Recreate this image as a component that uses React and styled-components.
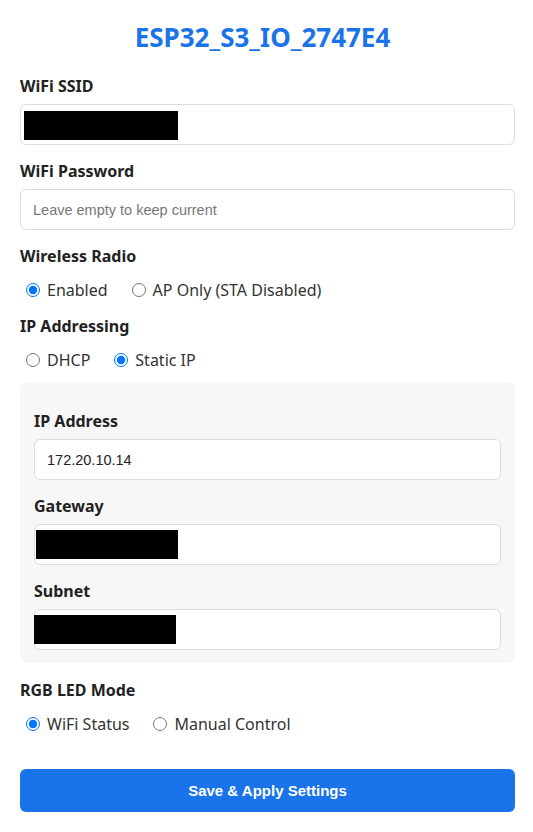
import React from "react";
import styled, { createGlobalStyle } from "styled-components";

const GlobalStyle = createGlobalStyle`
  body {
    margin: 0;
    background: #ffffff;
    font-family: "Noto Sans", "Open Sans", sans-serif;
    color: #222;
  }
`;

const Page = styled.div`
  display: flex;
  flex-direction: column;
  padding: 21px 18px 20px 20px;
`;

const Title = styled.h1`
  margin: 0 10px 23px 0;
  text-align: center;
  font-size: 26px;
  line-height: 32px;
  font-weight: 700;
  color: #1a73e8;
`;

const Group = styled.div`
  display: flex;
  flex-direction: column;
  gap: 8px;
  margin-top: ${({ top }) => top || 0}px;
  margin-bottom: 16px;
`;

const Label = styled.span`
  font-size: 16px;
  line-height: 20px;
  font-weight: 700;
  color: #222;
`;

const Field = styled.div`
  position: relative;
  display: flex;
  align-items: center;
  height: 41px;
  box-sizing: border-box;
  padding: 0 12px;
  background: #fff;
  border: 1px solid #ddd;
  border-radius: 6px;
  font-family: "Liberation Sans", Arial, sans-serif;
  font-size: 14.5px;
  color: ${({ placeholder }) => (placeholder ? "#777" : "#222")};
`;

const Redacted = styled.div`
  position: absolute;
  left: ${({ left }) => left}px;
  top: ${({ top }) => top}px;
  width: ${({ w }) => w}px;
  height: 29px;
  background: #000;
`;

const RadioRow = styled.div`
  display: flex;
  align-items: center;
  gap: 18px;
  height: 24px;
  margin: -4px 0 14px;
`;

const Option = styled.label`
  display: flex;
  align-items: center;
  font-size: 16px;
  color: #333;
`;

const Radio = styled.input.attrs({ type: "radio" })`
  width: 14px;
  height: 14px;
  margin: 0 7px 0 6px;
  accent-color: #0075ff;
`;

const Panel = styled.div`
  display: flex;
  flex-direction: column;
  padding: 29px 14px 13px;
  margin-top: -4px;
  background: #f7f7f7;
  border-radius: 8px;
  & > div:last-child {
    margin-bottom: 0;
  }
`;

const SaveButton = styled.button`
  height: 43px;
  margin-top: 19px;
  border: none;
  border-radius: 6px;
  background: #1a73e8;
  color: #fff;
  font-family: "Liberation Sans", Arial, sans-serif;
  font-size: 15px;
  font-weight: 700;
`;

const RadioGroup = ({ name, options, checked }) => (
  <RadioRow>
    {options.map((o) => (
      <Option key={o}>
        <Radio name={name} defaultChecked={o === checked} />
        {o}
      </Option>
    ))}
  </RadioRow>
);

export default function App() {
  return (
    <Page>
      <GlobalStyle />
      <Title>ESP32_S3_IO_2747E4</Title>

      <Group>
        <Label>WiFi SSID</Label>
        <Field>
          <Redacted left={3} top={6} w={154} />
        </Field>
      </Group>

      <Group>
        <Label>WiFi Password</Label>
        <Field placeholder>Leave empty to keep current</Field>
      </Group>

      <Group>
        <Label>Wireless Radio</Label>
      </Group>
      <RadioGroup
        name="radio"
        options={["Enabled", "AP Only (STA Disabled)"]}
        checked="Enabled"
      />

      <Group>
        <Label>IP Addressing</Label>
      </Group>
      <RadioGroup name="ip" options={["DHCP", "Static IP"]} checked="Static IP" />

      <Panel>
        <Group>
          <Label>IP Address</Label>
          <Field>172.20.10.14</Field>
        </Group>
        <Group>
          <Label>Gateway</Label>
          <Field>
            <Redacted left={1} top={5} w={142} />
          </Field>
        </Group>
        <Group>
          <Label>Subnet</Label>
          <Field>
            <Redacted left={-1} top={5} w={142} />
          </Field>
        </Group>
      </Panel>

      <Group top={17}>
        <Label>RGB LED Mode</Label>
      </Group>
      <RadioGroup
        name="led"
        options={["WiFi Status", "Manual Control"]}
        checked="WiFi Status"
      />

      <SaveButton>Save &amp; Apply Settings</SaveButton>
    </Page>
  );
}
